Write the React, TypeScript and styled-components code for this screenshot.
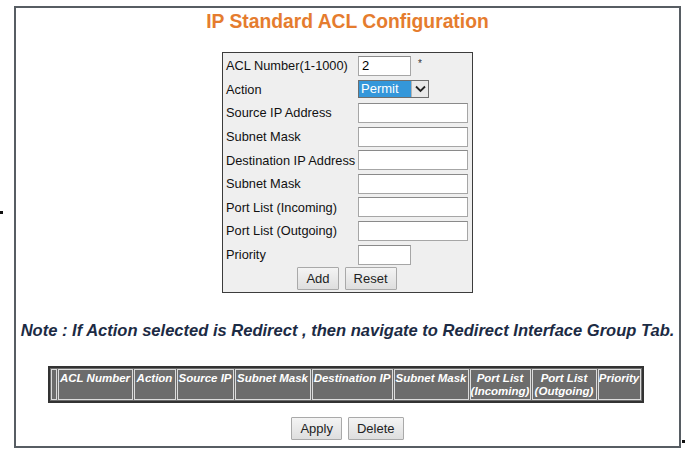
import React from "react";
import styled, { createGlobalStyle } from "styled-components";

const GlobalStyle = createGlobalStyle`
    body {
        margin: 0;
        background: #ffffff;
        font-family: "Liberation Sans", Arial, sans-serif;
    }
`

const Page = styled.div`
    display: flex;
    align-items: flex-start;
    width: 686px;
    height: 455px;
`

const Dot = styled.span<{ $top: number, $left: number }>`
    display: block;
    width: 3px;
    height: 3px;
    background: #111;
    margin-top: ${p => p.$top}px;
    margin-left: ${p => p.$left}px;
    flex: none;
`

const Frame = styled.div`
    margin-left: 11px;
    margin-top: 6px;
    width: 667px;
    height: 442px;
    box-sizing: border-box;
    border: 2px solid #575d63;
    display: flex;
    flex-direction: column;
    align-items: center;
    flex: none;
`

const Title = styled.h1`
    margin: 3px 0 0;
    font-size: 19.3px;
    line-height: 22px;
    font-weight: bold;
    color: #e57c2e;
`

const FormBox = styled.div`
    margin-top: 19px;
    width: 251px;
    box-sizing: border-box;
    border: 1px solid #3c3c3c;
    background: #efefef;
    padding: 1px 4px 2px 3px;
`

const FormRow = styled.div`
    display: grid;
    grid-template-columns: 132px 1fr;
    align-items: center;
    height: 23.6px;
    font-size: 12.8px;
    color: #111;
`

const Label = styled.span`
    white-space: nowrap;
`

const Field = styled.div`
    display: flex;
    align-items: center;
    gap: 7px;
`

const TextInput = styled.input<{ $w: number }>`
    width: ${p => p.$w}px;
    height: 20px;
    box-sizing: border-box;
    border: 1px solid #a6a6a6;
    border-top-color: #8a8a8a;
    background: #fff;
    font-family: "Liberation Sans", Arial, sans-serif;
    font-size: 13px;
    padding: 0 3px;
    color: #000;
`

const Star = styled.span`
    font-size: 10px;
    color: #333;
    align-self: flex-start;
    margin-top: 2px;
`

const Select = styled.div`
    display: flex;
    width: 71px;
    height: 18px;
    box-sizing: border-box;
    border: 1px solid #6e6e6e;
    background: #fff;
`

const SelectValue = styled.span`
    flex: 1;
    background: #3497da;
    color: #fff;
    font-size: 13px;
    line-height: 16px;
    padding-left: 2px;
`

const SelectArrow = styled.span`
    width: 16px;
    display: flex;
    align-items: center;
    justify-content: center;
    border-left: 1px solid #b5b5b5;
    background: #e9e9e9;
`

const ButtonRow = styled.div<{ $top: number }>`
    display: flex;
    justify-content: center;
    gap: 6px;
    margin-top: ${p => p.$top}px;
`

const Button = styled.button`
    height: 23px;
    padding: 0 8px;
    font-family: "Liberation Sans", Arial, sans-serif;
    font-size: 13px;
    color: #222;
    border: 1px solid #a9a9a9;
    border-radius: 1px;
    background: linear-gradient(#f4f4f4, #dedede);
`

const Note = styled.p`
    margin: 28px 0 0;
    font-size: 16.55px;
    font-weight: bold;
    font-style: italic;
    color: #1c2b44;
    white-space: nowrap;
`

const Table = styled.table`
    margin-top: 25px;
    margin-left: -4px;
    border: 2px solid #333;
    border-spacing: 1px;
    background: #6c6c6c;
    table-layout: fixed;
`

const Th = styled.th<{ $w: number }>`
    width: ${p => p.$w}px;
    height: 31px;
    padding: 2px 0 0;
    border: 1px solid #dcdcdc;
    color: #fff;
    font-size: 11.5px;
    line-height: 13px;
    font-weight: bold;
    font-style: italic;
    text-align: center;
    vertical-align: top;
    white-space: nowrap;
    box-sizing: border-box;
    overflow: hidden;
`

const formRows = [
    "Source IP Address",
    "Subnet Mask",
    "Destination IP Address",
    "Subnet Mask",
    "Port List (Incoming)",
    "Port List (Outgoing)",
]

const columns: [React.ReactNode, number][] = [
    ["", 6],
    ["ACL Number", 75],
    ["Action", 42],
    ["Source IP", 57],
    ["Subnet Mask", 76],
    ["Destination IP", 81],
    ["Subnet Mask", 75],
    [<>Port List<br />(Incoming)</>, 61],
    [<>Port List<br />(Outgoing)</>, 65],
    ["Priority", 43],
]

const ChevronDown = () => <svg width="11" height="8" viewBox="0 0 11 8">
    <path d="M1 1.5 L5.5 6 L10 1.5" stroke="#222" strokeWidth="1.8" fill="none" />
</svg>

const App = () => {
    return <>
        <GlobalStyle />
        <Page>
            <Dot $top={211} $left={0} />
            <Frame>
                <Title>IP Standard ACL Configuration</Title>
                <FormBox>
                    <FormRow>
                        <Label>ACL Number(1-1000)</Label>
                        <Field>
                            <TextInput $w={53} defaultValue="2" />
                            <Star>*</Star>
                        </Field>
                    </FormRow>
                    <FormRow>
                        <Label>Action</Label>
                        <Field>
                            <Select>
                                <SelectValue>Permit</SelectValue>
                                <SelectArrow><ChevronDown /></SelectArrow>
                            </Select>
                        </Field>
                    </FormRow>
                    {formRows.map((label, i) =>
                        <FormRow key={i}>
                            <Label>{label}</Label>
                            <Field><TextInput $w={110} /></Field>
                        </FormRow>
                    )}
                    <FormRow>
                        <Label>Priority</Label>
                        <Field><TextInput $w={53} /></Field>
                    </FormRow>
                    <ButtonRow $top={1}>
                        <Button>Add</Button>
                        <Button>Reset</Button>
                    </ButtonRow>
                </FormBox>
                <Note>Note : If Action selected is Redirect , then navigate to Redirect Interface Group Tab.</Note>
                <Table>
                    <thead>
                        <tr>
                            {columns.map(([label, w], i) => <Th key={i} $w={w}>{label}</Th>)}
                        </tr>
                    </thead>
                </Table>
                <ButtonRow $top={14}>
                    <Button>Apply</Button>
                    <Button>Delete</Button>
                </ButtonRow>
            </Frame>
            <Dot $top={440} $left={1} />
        </Page>
    </>
}

export default App
